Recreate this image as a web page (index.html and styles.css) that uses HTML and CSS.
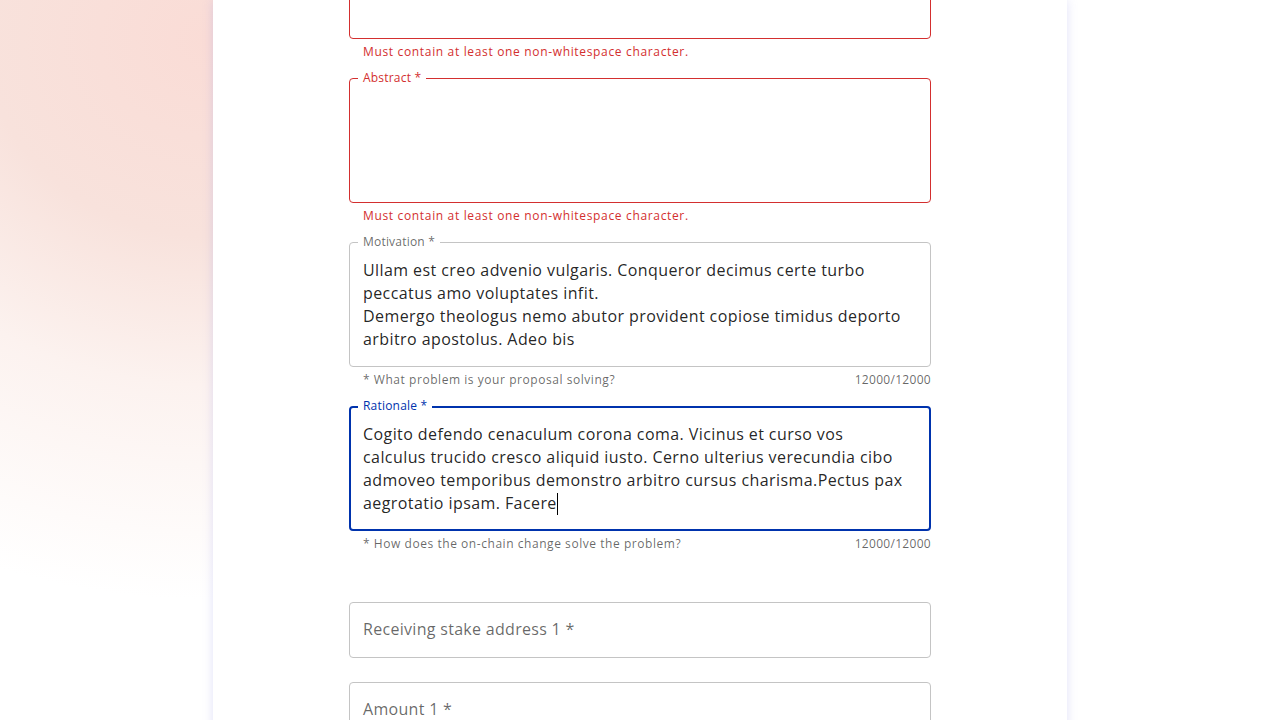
FILE: index.html
```html
<!DOCTYPE html>
<html lang="en">
<head>
<meta charset="utf-8">
<title>Proposal form</title>
<link rel="stylesheet" href="styles.css">
</head>
<body>
<main class="page">
  <section class="card">
    <form class="form">
      <div class="group first">
        <div class="field error tall">
          <div class="value"></div>
        </div>
        <div class="helper-row error-text"><span>Must contain at least one non-whitespace character.</span></div>
      </div>

      <div class="group">
        <div class="field error tall">
          <span class="label">Abstract *</span>
          <div class="value"></div>
        </div>
        <div class="helper-row error-text"><span>Must contain at least one non-whitespace character.</span></div>
      </div>

      <div class="group">
        <div class="field tall">
          <span class="label">Motivation *</span>
          <div class="value">Ullam est creo advenio vulgaris. Conqueror decimus certe turbo<br>peccatus amo voluptates infit.<br>Demergo theologus nemo abutor provident copiose timidus deporto<br>arbitro apostolus. Adeo bis</div>
        </div>
        <div class="helper-row"><span>* What problem is your proposal solving?</span><span class="count">12000/12000</span></div>
      </div>

      <div class="group">
        <div class="field focused tall">
          <span class="label">Rationale *</span>
          <div class="value">Cogito defendo cenaculum corona coma. Vicinus et curso vos<br>calculus trucido cresco aliquid iusto. Cerno ulterius verecundia cibo<br>admoveo temporibus demonstro arbitro cursus charisma.Pectus pax<br>aegrotatio ipsam. Facere<span class="caret"></span></div>
        </div>
        <div class="helper-row"><span>* How does the on-chain change solve the problem?</span><span class="count">12000/12000</span></div>
      </div>

      <div class="inputs">
        <div class="field single">
          <div class="placeholder">Receiving stake address 1 *</div>
        </div>
        <div class="field single">
          <div class="placeholder">Amount 1 *</div>
        </div>
      </div>
    </form>
  </section>
</main>
</body>
</html>
```

FILE: styles.css
```css
html, body {
  margin: 0;
  padding: 0;
  height: 720px;
  overflow: hidden;
}

body {
  font-family: "Open Sans", "Liberation Sans", sans-serif;
  background:
    radial-gradient(ellipse 640px 560px at 210px 40px, #fadcd6 0%, #f8e2dc 35%, rgba(251, 238, 234, 0.75) 62%, rgba(255, 255, 255, 0) 100%),
    #ffffff;
}

.page {
  display: flex;
  justify-content: center;
}

.card {
  width: 854px;
  min-height: 900px;
  background: #ffffff;
  box-shadow: 0 0 10px rgba(150, 150, 235, 0.28);
  box-sizing: border-box;
  padding: 0 136px;
}

.form {
  display: flex;
  flex-direction: column;
}

.group {
  display: flex;
  flex-direction: column;
  margin-bottom: 16px;
}

.group.first {
  margin-top: -86px;
}

.field {
  position: relative;
  box-sizing: border-box;
  border: 1px solid #c4c4c4;
  border-radius: 4px;
  padding: 16.5px 13px 15.5px;
  background: #fff;
}

.field.tall {
  height: 125px;
}

.field.single {
  height: 56px;
  padding-top: 15.5px;
}

.field.error {
  border-color: #d32f2f;
}

.field.focused {
  border: 2px solid #0033ad;
  padding: 15.5px 12px 14.5px;
}

.label {
  position: absolute;
  top: -9px;
  left: 8px;
  padding: 0 5px;
  background: #fff;
  font-size: 12px;
  line-height: 16px;
  letter-spacing: 0.2px;
  color: rgba(0, 0, 0, 0.6);
  white-space: nowrap;
}

.field.error .label {
  color: #d32f2f;
}

.field.focused .label {
  left: 7px;
  top: -10px;
  color: #0033ad;
}

.value {
  font-size: 16px;
  line-height: 23px;
  letter-spacing: 0.42px;
  color: rgba(0, 0, 0, 0.87);
  white-space: nowrap;
}

.caret {
  display: inline-block;
  width: 0;
  height: 22px;
  border-left: 1px solid #000;
  vertical-align: -6px;
}

.helper-row {
  display: flex;
  justify-content: space-between;
  margin: 3px 0 0 14px;
  font-size: 12px;
  line-height: 19.92px;
  letter-spacing: 0.55px;
  color: rgba(0, 0, 0, 0.6);
}

.helper-row.error-text {
  letter-spacing: 0.66px;
  color: #d32f2f;
}

.helper-row .count {
  letter-spacing: 0.3px;
}

.inputs {
  display: flex;
  flex-direction: column;
  gap: 24px;
  margin-top: 32px;
}

.placeholder {
  font-size: 16px;
  line-height: 23px;
  letter-spacing: 0.3px;
  color: rgba(0, 0, 0, 0.6);
}
```
